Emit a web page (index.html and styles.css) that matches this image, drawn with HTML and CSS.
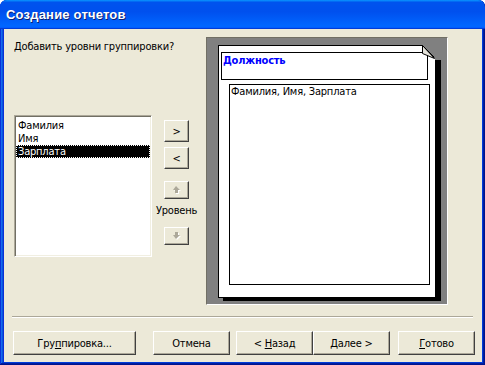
FILE: index.html
```html
<!DOCTYPE html>
<html lang="ru">
<head>
  <meta charset="UTF-8" />
  <title>Создание отчетов</title>
  <link rel="stylesheet" href="styles.css">
</head>
<body>

  <div class="window">
    <div class="titlebar">Создание отчетов</div>

    <div class="client">
      <div class="main">

        <!-- ЛЕВАЯ ЧАСТЬ: ПОЛЯ И КНОПКИ -->
        <div class="left">
          <p class="question">Добавить уровни группировки?</p>
          <div class="picker">
            <ul class="listbox">
              <li>Фамилия</li>
              <li>Имя</li>
              <li class="selected"><span>Зарплата</span></li>
            </ul>
            <div class="movers">
              <button class="btn mover">&gt;</button>
              <button class="btn mover second">&lt;</button>
              <button class="btn arrow up" disabled>
                <svg width="9" height="8" viewBox="0 0 9 8">
                  <polygon points="5,1 9,5 7,5 7,8 4,8 4,5 2,5" fill="#fff"/>
                  <polygon points="4,0 8,4 6,4 6,7 3,7 3,4 1,4" fill="#aca899"/>
                </svg>
              </button>
              <span class="level">Уровень</span>
              <button class="btn arrow down" disabled>
                <svg width="9" height="8" viewBox="0 0 9 8">
                  <polygon points="5,8 9,4 7,4 7,1 4,1 4,4 2,4" fill="#fff"/>
                  <polygon points="4,7 8,3 6,3 6,0 3,0 3,3 1,3" fill="#aca899"/>
                </svg>
              </button>
            </div>
          </div>
        </div>

        <!-- ПРЕДПРОСМОТР ОТЧЕТА -->
        <div class="preview">
          <div class="page">
            <div class="group-head">Должность</div>
            <div class="detail">Фамилия, Имя, Зарплата</div>
            <svg class="fold" width="20" height="15" viewBox="0 0 20 15">
              <polygon points="0,0 20,0 20,15 13,15 13,13" fill="#808080"/>
              <polygon points="0.5,0.5 0.5,8.5 12.5,13.5" fill="#e4e2da" stroke="#000" stroke-width="1"/>
              <line x1="0.5" y1="0.5" x2="12.5" y2="12.5" stroke="#000" stroke-width="1"/>
            </svg>
          </div>
        </div>

      </div>

      <div class="separator"></div>

      <!-- КНОПКИ МАСТЕРА -->
      <div class="actions">
        <button class="btn wide">Гру<u>п</u>пировка...</button>
        <button class="btn cancel">Отмена</button>
        <button class="btn back">&lt; <u>Н</u>азад</button>
        <button class="btn next"><u>Д</u>алее &gt;</button>
        <button class="btn finish"><u>Г</u>отово</button>
      </div>
    </div>
  </div>

</body>
</html>
```

FILE: styles.css
```css
body {
  margin: 0;
  font-family: 'DejaVu Sans Condensed', 'Liberation Sans', sans-serif;
  font-size: 11px;
  letter-spacing: -0.2px;
  color: #000;
  background: #fff;
}
.window {
  width: 485px;
  height: 365px;
  display: flex;
  flex-direction: column;
  background: #0831d9;
  border-radius: 7px 7px 0 0;
  overflow: hidden;
  box-shadow: inset -1px -1px #00138c, inset 1px 1px #0831d9, inset -2px -2px #001ea0, inset 2px 2px #166aee, inset -3px -3px #003bda, inset 3px 3px #0855dd;
}
.titlebar {
  height: 29px;
  line-height: 30px;
  padding-left: 6px;
  font-family: 'Liberation Sans', sans-serif;
  font-weight: bold;
  font-size: 13px;
  letter-spacing: 0.2px;
  color: #fff;
  text-shadow: 1px 1px #0f1f6e;
  background: linear-gradient(180deg, #0997ff, #0053ee 8%, #0050ee 40%, #0066ff 88%, #0066ff 93%, #005bff 95%, #003dd7 96%, #003dd7);
}
.client {
  flex: 1;
  margin: 0 3px 3px 4px;
  background: #ece9d8;
}
.main {
  display: flex;
  padding: 8px 0 0 10px;
}
.left {
  width: 192px;
}
.question {
  margin: 3px 0 0;
  line-height: 13px;
}
.picker {
  display: flex;
  margin-top: 62px;
}
.listbox {
  box-sizing: border-box;
  width: 138px;
  height: 142px;
  margin: 0;
  padding: 3px 1px 0;
  list-style: none;
  background: #fff;
  border: 1px solid;
  border-color: #aca899 #fff #fff #aca899;
  box-shadow: inset 1px 1px #716f64, inset -1px -1px #f1efe2;
}
.listbox li {
  height: 13px;
  line-height: 13px;
  padding-left: 2px;
}
.listbox li.selected {
  background: #000;
  color: #fff;
  outline: 1px dotted #fff;
  outline-offset: -1px;
}
.movers {
  width: 49px;
  display: flex;
  flex-direction: column;
  align-items: center;
  padding-top: 5px;
}
.btn {
  box-sizing: border-box;
  padding: 0;
  font-family: inherit;
  font-size: 11px;
  letter-spacing: inherit;
  color: #000;
  background: #ece9d8;
  border: 1px solid;
  border-color: #fff #404040 #404040 #fff;
  box-shadow: inset -1px -1px #aca899;
  border-radius: 0;
}
.btn u {
  text-decoration: underline;
}
.mover {
  width: 25px;
  height: 22px;
}
.mover.second {
  margin-top: 5px;
}
.arrow {
  width: 25px;
  height: 18px;
  display: flex;
  align-items: center;
  justify-content: center;
}
.arrow.up {
  margin-top: 12px;
}
.arrow.down {
  margin-top: 10px;
}
.level {
  margin-top: 5px;
  line-height: 13px;
}
.preview {
  box-sizing: border-box;
  width: 242px;
  height: 268px;
  padding: 7px 0 0 11px;
  background: #808080;
  border: 1px solid;
  border-color: #716f64 #fff #fff #716f64;
}
.page {
  position: relative;
  box-sizing: border-box;
  width: 218px;
  height: 253px;
  background: #fff;
  border: 1px solid #000;
  box-shadow: 5px 3px 0 #000;
}
.group-head {
  box-sizing: border-box;
  width: 207px;
  height: 28px;
  margin: 6px 0 0 2px;
  padding: 1px 0 0 1px;
  line-height: 13px;
  border: 1px solid #000;
  color: #0000ff;
  font-weight: bold;
}
.detail {
  box-sizing: border-box;
  width: 201px;
  height: 201px;
  margin: 4px 0 0 10px;
  padding: 0 0 0 1px;
  line-height: 13px;
  border: 1px solid #000;
}
.fold {
  position: absolute;
  left: 203px;
  top: -1px;
}
.separator {
  width: 461px;
  margin: 11px 0 0 8px;
  border-top: 1px solid #aca899;
  border-bottom: 1px solid #fff;
}
.actions {
  display: flex;
  margin-top: 13px;
  padding-left: 9px;
}
.actions .btn {
  width: 77px;
  height: 24px;
}
.actions .wide {
  width: 123px;
}
.actions .cancel {
  margin-left: 17px;
}
.actions .back {
  margin-left: 6px;
}
.actions .finish {
  margin-left: 8px;
}
```
